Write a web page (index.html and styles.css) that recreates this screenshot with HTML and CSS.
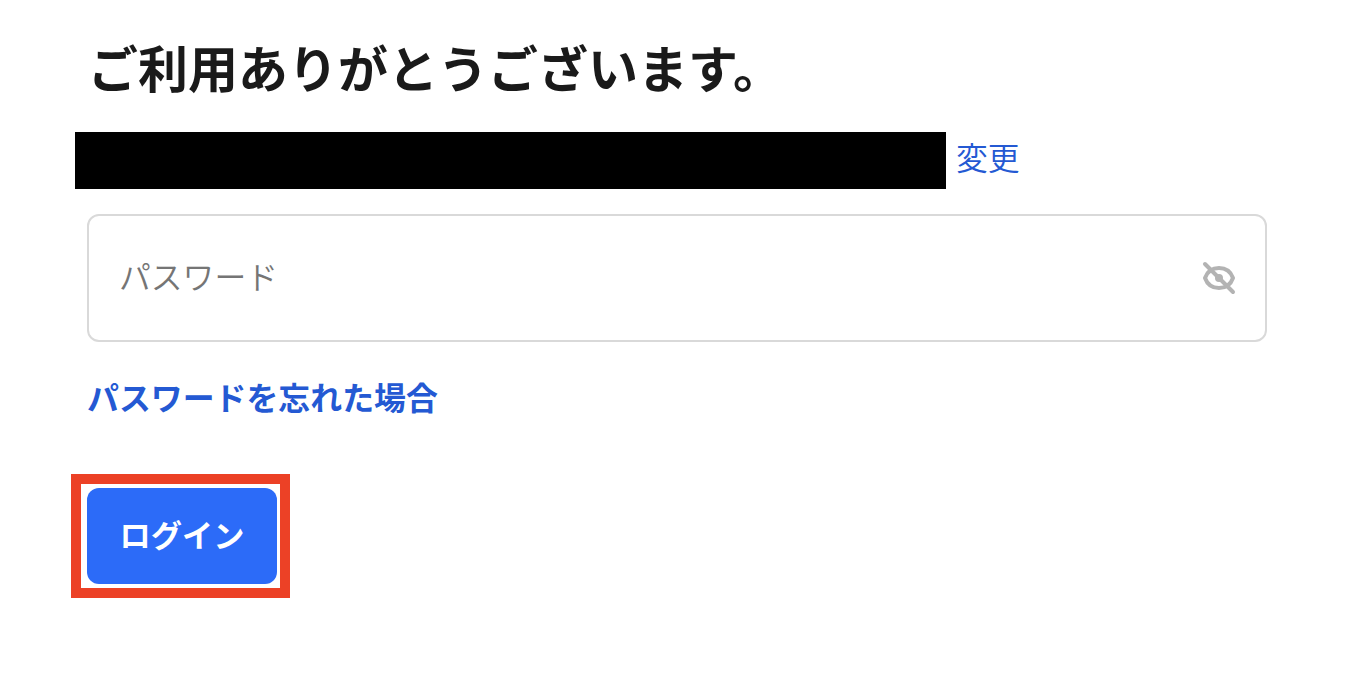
FILE: index.html
```html
<!DOCTYPE html>
<html lang="ja">
<head>
    <meta charset="UTF-8">
    <meta name="viewport" content="width=device-width, initial-scale=1.0">
    <title>ログイン</title>
    <link rel="stylesheet" href="styles.css">
</head>
<body>
    <main class="login">
        <h1 class="title">ご利用ありがとうございます。</h1>

        <div class="account">
            <span class="account-name"></span>
            <a href="#" class="change-link">変更</a>
        </div>

        <form class="login-form">
            <div class="password-field">
                <input type="password" class="password-input" placeholder="パスワード">
                <button type="button" class="toggle-button" aria-label="パスワードを表示">
                    <svg class="eye-icon" viewBox="0 0 36 36" fill="none" stroke="#b3b3b3" stroke-width="4" stroke-linecap="round" stroke-linejoin="round">
                        <path d="M4 18C6.5 11 11.5 8 18 8S29.5 11 32 18C29.5 25 24.5 28 18 28S6.5 25 4 18Z"/>
                        <circle cx="18" cy="18" r="4" fill="#b3b3b3" stroke="none"/>
                        <path d="M4 4L32 32"/>
                    </svg>
                </button>
            </div>

            <a href="#" class="forgot-link">パスワードを忘れた場合</a>

            <div class="submit-frame">
                <button type="button" class="submit-button">ログイン</button>
            </div>
        </form>
    </main>
</body>
</html>
```

FILE: styles.css
```css
/* Global styles */
* {
    box-sizing: border-box;
}

body {
    font-family: "Liberation Sans", "Noto Sans CJK JP", sans-serif;
    margin: 0;
    background-color: #fff;
    color: #1a1a1a;
}

a {
    color: #2459d3;
    text-decoration: none;
}

.login {
    padding: 35px 99px 0 87px;
}

.title {
    margin: 0 0 0 1px;
    font-size: 50px;
    line-height: 72px;
    font-weight: 700;
    white-space: nowrap;
}

/* Account row */
.account {
    display: flex;
    gap: 10px;
    margin: 25px 0 0 -12px;
    height: 57px;
}

.account-name {
    width: 871px;
    background-color: #000;
}

.change-link {
    font-family: "Noto Sans CJK JP", sans-serif;
    font-size: 31.8px;
    line-height: 48px;
    font-weight: 350;
}

/* Password field */
.login-form {
    display: flex;
    flex-direction: column;
    align-items: flex-start;
    margin-top: 25px;
}

.password-field {
    display: flex;
    align-items: center;
    width: 100%;
    height: 128px;
    padding: 0 28px 0 30px;
    border: 2px solid #d9d9d9;
    border-radius: 12px;
}

.password-input {
    flex: 1;
    height: 60px;
    padding: 0 0 6px;
    border: 0;
    outline: 0;
    background: none;
    font: 350 31.8px "Noto Sans CJK JP", sans-serif;
}

.password-input::placeholder {
    color: #757575;
}

.toggle-button {
    width: 36px;
    height: 36px;
    padding: 0;
    border: 0;
    background: none;
}

.eye-icon {
    display: block;
    width: 36px;
    height: 36px;
}

.forgot-link {
    margin-top: 33px;
    font-size: 31.9px;
    line-height: 48px;
    font-weight: 700;
}

/* Login button */
.submit-frame {
    margin: 51px 0 0 -16px;
    padding: 4px 3px 4px 6px;
    border: 10px solid #ec4126;
}

.submit-button {
    display: block;
    width: 190px;
    height: 96px;
    padding: 0 0 6px;
    border: 0;
    border-radius: 12px;
    background-color: #2c6bf8;
    color: #fff;
    font: 700 31.2px "Noto Sans CJK JP", sans-serif;
}
```
